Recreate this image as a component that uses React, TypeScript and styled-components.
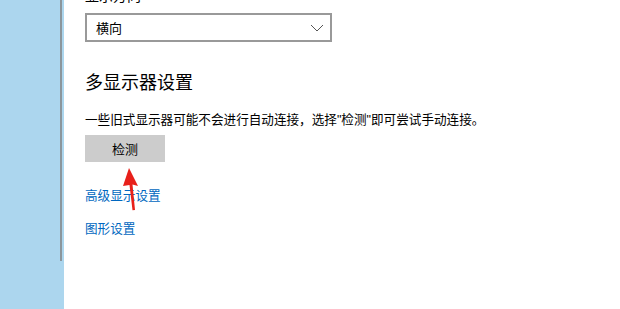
import React from "react";
import styled, { createGlobalStyle } from "styled-components";

const GlobalStyle = createGlobalStyle`
  html, body {
    margin: 0;
    padding: 0;
    background: #ffffff;
  }
  body {
    font-family: "Liberation Sans", "Noto Sans CJK SC", sans-serif;
    overflow: hidden;
  }
`;

const Page = styled.div`
  display: flex;
  width: 620px;
  height: 309px;
  overflow: hidden;
`;

const Sidebar = styled.div`
  position: relative;
  width: 64px;
  flex-shrink: 0;
  background: #acd6ee;
`;

const ScrollThumb = styled.div`
  position: absolute;
  left: 60px;
  top: 0;
  width: 2px;
  height: 261px;
  background: #8c969c;
`;

const Content = styled.div`
  position: relative;
  flex: 1;
  background: #ffffff;
  padding-left: 21px;
  display: flex;
  flex-direction: column;
  align-items: flex-start;
`;

const FieldLabel = styled.div`
  font-size: 14px;
  line-height: 19px;
  color: #000;
  margin-top: -13px;
  height: 19px;
`;

const Select = styled.div`
  box-sizing: border-box;
  margin-top: 7px;
  width: 247px;
  height: 29px;
  border: 2px solid #999999;
  background: #fff;
  display: flex;
  align-items: center;
  justify-content: space-between;
  padding: 0 6px 0 9px;
  font-size: 13px;
  color: #000;
`;

const Heading = styled.h2`
  margin: 29px 0 0;
  font-size: 18px;
  line-height: 24px;
  font-weight: normal;
  color: #000;
`;

const Description = styled.p`
  margin: 16px 0 0;
  font-size: 12.6px;
  line-height: 18px;
  color: #000;
`;

const Button = styled.button`
  margin-top: 6px;
  width: 80px;
  height: 27px;
  border: none;
  background: #cccccc;
  font-family: inherit;
  font-size: 13px;
  color: #000;
  padding: 0;
`;

const Link = styled.a<{ $gap: number }>`
  margin-top: ${(p) => p.$gap}px;
  font-size: 12.6px;
  line-height: 18px;
  color: #0067c0;
  text-decoration: none;
`;

const Arrow = styled.svg`
  position: absolute;
  left: 54px;
  top: 164px;
  overflow: visible;
`;

export default function App() {
  return (
    <>
      <GlobalStyle />
      <Page>
        <Sidebar>
          <ScrollThumb />
        </Sidebar>
        <Content>
          <FieldLabel>显示方向</FieldLabel>
          <Select>
            <span>横向</span>
            <svg width="14" height="8" viewBox="0 0 14 8">
              <path d="M1 1 L7 7 L13 1" fill="none" stroke="#555" strokeWidth="1" />
            </svg>
          </Select>
          <Heading>多显示器设置</Heading>
          <Description>一些旧式显示器可能不会进行自动连接，选择"检测"即可尝试手动连接。</Description>
          <Button>检测</Button>
          <Link href="#" $gap={25}>高级显示设置</Link>
          <Link href="#" $gap={15}>图形设置</Link>
          <Arrow width="30" height="50" viewBox="0 0 30 50">
            <path d="M11 4 L20 22 L14.5 20.5 L17 46 L14.5 46.3 L11.5 21 L5 22 Z" fill="#e8201a" />
          </Arrow>
        </Content>
      </Page>
    </>
  );
}
